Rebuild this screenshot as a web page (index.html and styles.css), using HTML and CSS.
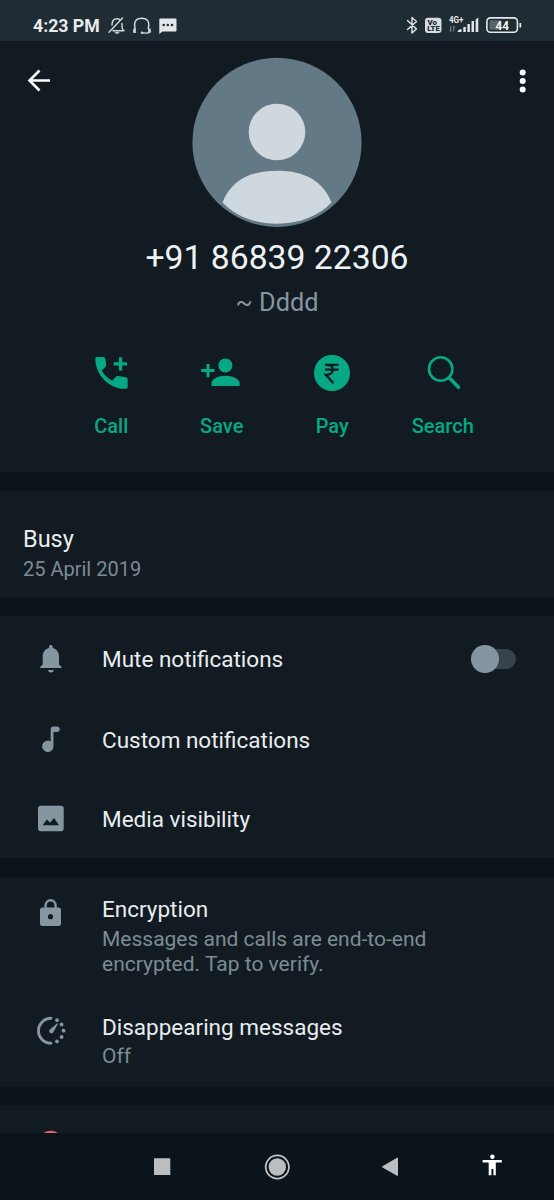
FILE: index.html
```html
<!DOCTYPE html>
<html lang="en">
<head>
<meta charset="utf-8">
<title>Contact info</title>
<link rel="stylesheet" href="styles.css">
</head>
<body>
<div class="screen">
  <div class="status">
    <span class="clock">4:23 PM</span>
    <svg class="status-left" width="72" height="41" viewBox="106 0 72 41">
      <g fill="none" stroke="#d3d9dc" stroke-width="1.4" stroke-linecap="round" stroke-linejoin="round">
        <path d="M109 32.200 122.500 18"/>
        <path d="M112 25c0-4 1.500-6.200 5-6.200 1.200 0 2 .3 2.700.8M122 23.500v3.500c0 1.700.8 2.800 2 3.700h-11"/>
      </g>
      <path d="M114.500 32h5c-.3 1.300-1.200 1.900-2.500 1.900s-2.200-.6-2.500-1.900z" fill="#b5bdc1"/>
      <path d="M135.200 29c-2-8 1.300-10.700 6.500-10.700s8.500 2.700 6.500 10.700" fill="none" stroke="#d3d9dc" stroke-width="1.500"/>
      <path d="M133.500 28.500h2.300v4.500h-1.400c-.9 0-1.400-.6-1.400-1.500zM150.500 28.500h-2.300v4.500h1.400c.9 0 1.400-.6 1.400-1.500z" fill="#d3d9dc"/>
      <path d="M149 33h-6" stroke="#d3d9dc" stroke-width="1.300"/><circle cx="142" cy="32.700" r="1.300" fill="#d3d9dc"/>
      <path d="M160 18.500h15.500a1 1 0 0 1 1 1v11a1 1 0 0 1-1 1H162.500L159.300 34V19.500a1 1 0 0 1 .7-1z" fill="#e3e7e9"/>
      <g fill="#202c33"><circle cx="163.700" cy="25" r="1.300"/><circle cx="167.800" cy="25" r="1.300"/><circle cx="172" cy="25" r="1.300"/></g>
    </svg>
    <svg class="status-right" width="120" height="41" viewBox="404 0 120 41">
      <path d="M407.500 20.500 416.500 29 412 33V17.500l4.500 4-9 8" fill="none" stroke="#e3e7e9" stroke-width="1.400" stroke-linejoin="round" stroke-linecap="round"/>
      <rect x="425" y="17.700" width="16.500" height="15.300" rx="3" fill="#d6dbdd"/>
      <text class="tiny volte" x="427.500" y="24.700" textLength="9.500" lengthAdjust="spacingAndGlyphs">Vo</text>
      <text class="tiny volte" x="427.200" y="31.300" textLength="12.500" lengthAdjust="spacingAndGlyphs">LTE</text>
      <text class="tiny net" x="449" y="22.500" textLength="14.500" lengthAdjust="spacingAndGlyphs">4G+</text>
      <path d="M450.800 26v5.500M453.700 26v5.500M449.700 30l1.100 1.500M454.700 27.500l-1-1.500" stroke="#7d888e" stroke-width="1" fill="none"/>
      <g fill="#e3e7e9"><path d="M457.500 32c.4-2 1.800-2.600 4-3v3z"/><rect x="463.300" y="27" width="2.500" height="5"/><rect x="467.400" y="24" width="2.500" height="8"/><rect x="471.500" y="21" width="2.500" height="11"/><path d="M475.600 19.500 478.300 17.500V32h-2.700z"/></g>
      <rect x="486.900" y="17.900" width="30.500" height="14.300" rx="3.500" fill="none" stroke="#e3e7e9" stroke-width="1.600"/>
      <rect x="489.300" y="20.300" width="12" height="9.500" rx="1.500" fill="#59646a"/>
      <path d="M520.300 23v4.500" stroke="#e3e7e9" stroke-width="1.800"/>
      <text class="tiny battery" x="495.500" y="29.700" textLength="13.500" lengthAdjust="spacingAndGlyphs">44</text>
    </svg>
  </div>

  <header class="panel profile">
    <div class="hero">
      <svg width="70" height="170" viewBox="0 57 70 170"><path d="M39.500 70.500 29.500 80.500l10 10M29.800 80.500H50" fill="none" stroke="#fff" stroke-width="2.600"/></svg>
      <svg width="170" height="170" viewBox="192 57 170 170">
        <circle cx="277" cy="142.400" r="84.600" fill="#637985"/>
        <circle cx="277" cy="132" r="28.300" fill="#d0d8df"/>
        <path d="M222.500 202.500C231 181 249 170.700 277 170.700s46 10.300 54.500 31.800C318 216.500 299 223.700 277 223.700s-41-7.200-54.500-21.200z" fill="#d0d8df"/>
      </svg>
      <svg width="70" height="170" viewBox="484 57 70 170"><g fill="#fff"><circle cx="522.700" cy="72.500" r="3"/><circle cx="522.700" cy="81" r="3"/><circle cx="522.700" cy="89.500" r="3"/></g></svg>
    </div>
    <h1 class="number">+91 86839 22306</h1>
    <p class="nickname">~ Dddd</p>
    <div class="actions">
      <div class="action">
        <svg width="44" height="44" viewBox="89 351 44 44" fill="#06a984"><path d="M97 357h6.300c1.200 0 1.700.7 1.900 1.800l1 5.700c.1 1-.1 1.700-.8 2.400l-3.800 3.500c2.700 4.500 6.200 7.900 10.700 10.400l3.500-3.900c.6-.7 1.400-1 2.400-.8l7.600 1.200c1.200.2 1.900.9 1.900 2v7.200c0 1.500-.7 2.300-2.200 2.300C109 389.500 95.300 374 95.300 359c0-1.300.5-2 1.700-2z"/><path d="M119 357.200h3.200v5h5v3.200h-5v5H119v-5h-5.300v-3.200h5.300z"/></svg>
        <span>Call</span>
      </div>
      <div class="action">
        <svg width="44" height="44" viewBox="199 351 44 44" fill="#06a984"><circle cx="224.400" cy="365.500" r="7"/><path d="M210.500 386v-2.500c0-5 7-7.800 14-7.800s14.200 2.800 14.200 7.800v2.500zM205.500 364h3v5h5v3h-5v5.300h-3V372h-5.300v-3h5.300z"/></svg>
        <span>Save</span>
      </div>
      <div class="action">
        <svg width="44" height="44" viewBox="310 351 44 44"><circle cx="332" cy="373" r="18" fill="#06a984"/><path d="M325 364.800h13.500M325 369.700h13.500M326.500 364.800c8.500-.5 8.500 10 0 10H325.800l7.700 8.500" fill="none" stroke="#121b22" stroke-width="2.300"/></svg>
        <span>Pay</span>
      </div>
      <div class="action">
        <svg width="44" height="44" viewBox="420 351 44 44" fill="none" stroke="#06a984"><circle cx="439.700" cy="369" r="11.700" stroke-width="2.600"/><path d="M448.500 378l9 9.300" stroke-width="3.600" stroke-linecap="round"/></svg>
        <span>Search</span>
      </div>
    </div>
  </header>

  <section class="panel about">
    <p class="title">Busy</p>
    <p class="sub date">25 April 2019</p>
  </section>

  <section class="panel settings">
    <div class="row mute">
      <svg width="102" height="44" viewBox="0 637 102 44" fill="#8696a0"><path d="M49 648v-1c0-2.600 3.700-2.600 3.700 0v1c4.200 1.100 6.300 4.500 6.300 8.500v8l2.500 2.300V668H40.200v-1.200l2.500-2.300v-8c0-4 2.100-7.400 6.300-8.500zM48 670h5.800c-.4 1.700-1.300 2.500-2.900 2.500s-2.500-.8-2.900-2.500z"/></svg>
      <p class="title">Mute notifications</p>
      <span class="switch"><span class="knob"></span></span>
    </div>
    <div class="row custom">
      <svg width="102" height="44" viewBox="0 718 102 44" fill="#8696a0"><path d="M53.500 726.500H57a2.700 2.700 0 0 1 0 5.400h-3.500v14.500a5.700 5.700 0 1 1-2.800-5V729.300c0-1.800.9-2.800 2.800-2.800z"/></svg>
      <p class="title">Custom notifications</p>
    </div>
    <div class="row media">
      <svg width="102" height="44" viewBox="0 797 102 44"><rect x="38" y="805.700" width="25.700" height="25.500" rx="2.700" fill="#8696a0"/><path d="M42.500 825.300 47 819.500l3 3.200 4-4.700 5 7.300z" fill="#121b22"/></svg>
      <p class="title">Media visibility</p>
    </div>
  </section>

  <section class="panel privacy">
    <div class="row encryption">
      <svg width="102" height="44" viewBox="0 891 102 44"><path d="M45.600 909v-3.500c0-3 2-5.200 5-5.200s5 2.200 5 5.200v3.500" fill="none" stroke="#8696a0" stroke-width="2.400"/><rect x="40" y="907.500" width="21" height="18.500" rx="2.500" fill="#8696a0"/><circle cx="50.500" cy="916.700" r="2.600" fill="#121b22"/></svg>
      <div><p class="title">Encryption</p><p class="sub">Messages and calls are end-to-end<br>encrypted. Tap to verify.</p></div>
    </div>
    <div class="row vanishing">
      <svg width="102" height="44" viewBox="0 1009 102 44" fill="#8696a0"><path d="M51 1018.300a12.500 12.500 0 0 0 0 25" fill="none" stroke="#8696a0" stroke-width="2.900" stroke-linecap="round"/><circle cx="57" cy="1020.200" r="1.900"/><circle cx="61.600" cy="1024.500" r="1.900"/><circle cx="63.500" cy="1030.700" r="1.900"/><circle cx="61.600" cy="1037" r="1.900"/><circle cx="57" cy="1041.400" r="1.900"/><path d="M58 1023.800 53.200 1032.500c-1.800 2.200-5.200-.5-3.600-2.800l7.600-6.500z"/></svg>
      <div><p class="title">Disappearing messages</p><p class="sub">Off</p></div>
    </div>
  </section>

  <section class="panel block">
    <svg width="102" height="28" viewBox="0 1105 102 28"><circle cx="50.700" cy="1143.700" r="11.600" fill="none" stroke="#f15c6d" stroke-width="2.600"/></svg>
  </section>

  <nav class="navbar">
    <svg width="554" height="67" viewBox="0 1133 554 67">
      <rect x="154" y="1158.300" width="16.300" height="16.700" rx=".6" fill="#bbbec0"/>
      <circle cx="277.300" cy="1167" r="11.600" fill="none" stroke="#c3c6c8" stroke-width="1.700"/><circle cx="277.300" cy="1167" r="8.700" fill="#bbbec0"/>
      <path d="M382.500 1166.300 397 1157.800q1-.4 1 .7v16.500q0 1.100-1 .7L382.500 1167.500q-.8-.6 0-1.200z" fill="#bbbec0"/>
      <g fill="#fff"><circle cx="492.400" cy="1156.800" r="2.200"/><path d="M483 1160h18.400c.8 0 .8 2.500 0 2.500h-5.600V1175.300h-2.400v-6.300h-2v6.300H488.700v-12.800H483c-.8 0-.8-2.500 0-2.500z"/></g>
    </svg>
  </nav>
</div>
</body>
</html>
```

FILE: styles.css
```css
* { box-sizing: border-box; }
body { margin: 0; background: #0b141a; font-family: Roboto, sans-serif; }
h1, p { margin: 0; font-weight: 400; }
svg { display: block; flex: none; }

.screen { width: 554px; height: 1200px; overflow: hidden; display: flex; flex-direction: column; }
.status { height: 41px; flex: none; background: #202c33; display: flex; }
.clock { margin-left: 33px; width: 73px; line-height: 52px; height: 41px; font-size: 17.700px; font-weight: 700; color: #e7ebed; white-space: nowrap; }
.status-right { margin-left: auto; margin-right: 30px; }
.tiny { font-weight: 700; }
.volte { font-size: 6.500px; font-weight: 900; fill: #202c33; }
.net { font-size: 8.500px; fill: #e3e7e9; }
.battery { font-size: 12px; fill: #f2f4f5; }

.panel { flex: none; background: #121b22; }
.profile { height: 431px; margin-bottom: 19px; padding-top: 16px; }
.hero { display: flex; justify-content: space-between; }
.number { margin-top: 11px; line-height: 40px; font-size: 33.700px; text-align: center; color: #eef2f5; }
.nickname { margin-top: 10px; line-height: 30px; font-size: 25.300px; text-align: center; color: #8696a0; }
.actions { margin: 33px 0 0 56px; width: 442px; display: grid; grid-template-columns: repeat(4, 1fr); }
.action { display: flex; flex-direction: column; align-items: center; gap: 19px; line-height: 24px; font-size: 20px; font-weight: 500; color: #06a984; }

.title { line-height: 30px; font-size: 22.500px; color: #e9edef; white-space: nowrap; }
.sub { line-height: 24.700px; font-size: 21px; color: #7d8b94; white-space: nowrap; }
.about { height: 107px; margin-bottom: 18px; padding: 33px 23px 0; }
.about .title { font-size: 23.500px; }
.about .date { margin-top: 3px; font-size: 20px; }

.settings { height: 242px; margin-bottom: 19px; padding-top: 21px; }
.row { display: flex; }
.settings .row { align-items: center; height: 44px; }
.custom { margin-top: 37px; }
.media { margin-top: 35px; }
.switch { margin-left: auto; margin-right: 38px; width: 45px; height: 20px; border-radius: 10px; background: linear-gradient(90deg, transparent 12px, #37434b 12px); display: flex; align-items: center; }
.knob { width: 28px; height: 28px; flex: none; border-radius: 50%; background: #8696a0; }

.privacy { height: 210px; margin-bottom: 18px; padding-top: 14px; }
.encryption .title { margin-top: 3px; }
.encryption .sub { margin-top: 3px; }
.vanishing { margin-top: 33px; }
.vanishing .title { margin-top: 3px; }
.vanishing .sub { margin-top: 2px; }
.block { height: 28px; }
.navbar { height: 67px; flex: none; background: #0b141a; }
```
